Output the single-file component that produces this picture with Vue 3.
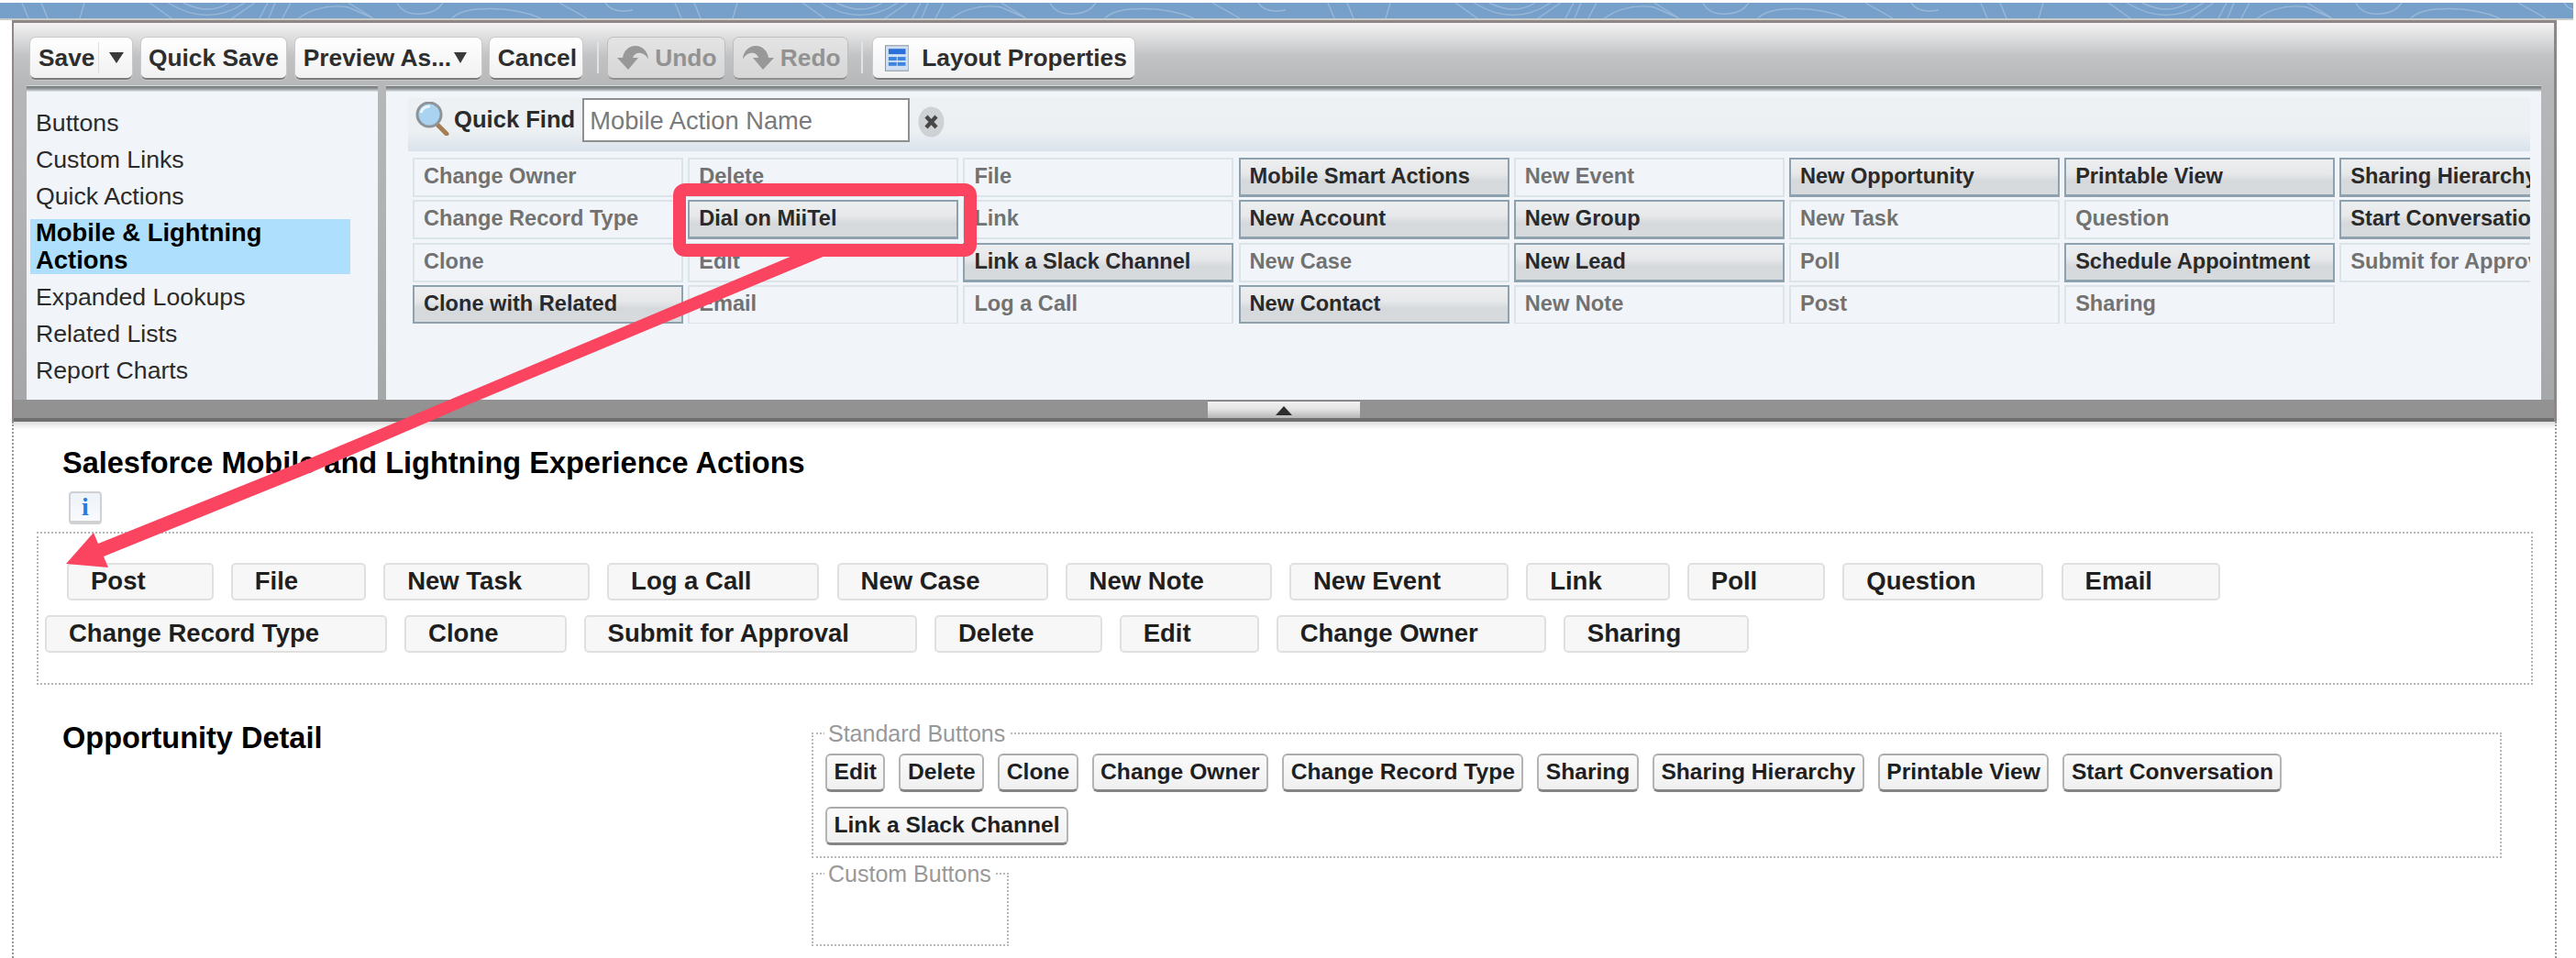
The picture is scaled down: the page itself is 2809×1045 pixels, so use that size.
<script setup>
const sideItems = [
  { label: 'Buttons' },
  { label: 'Custom Links' },
  { label: 'Quick Actions' },
  { label: 'Mobile & Lightning Actions', active: true },
  { label: 'Expanded Lookups' },
  { label: 'Related Lists' },
  { label: 'Report Charts' }
]
const cells = [
  ['Change Owner'], ['Change Record Type'], ['Clone'], ['Clone with Related', 1],
  ['Delete'], ['Dial on MiiTel', 1], ['Edit'], ['Email'],
  ['File'], ['Link'], ['Link a Slack Channel', 1], ['Log a Call'],
  ['Mobile Smart Actions', 1], ['New Account', 1], ['New Case'], ['New Contact', 1],
  ['New Event'], ['New Group', 1], ['New Lead', 1], ['New Note'],
  ['New Opportunity', 1], ['New Task'], ['Poll'], ['Post'],
  ['Printable View', 1], ['Question'], ['Schedule Appointment', 1], ['Sharing'],
  ['Sharing Hierarchy', 1], ['Start Conversation', 1], ['Submit for Approval']
]
const actionsA = ['Post', 'File', 'New Task', 'Log a Call', 'New Case', 'New Note', 'New Event', 'Link', 'Poll', 'Question', 'Email']
const actionsB = ['Change Record Type', 'Clone', 'Submit for Approval', 'Delete', 'Edit', 'Change Owner', 'Sharing']
const standard = ['Edit', 'Delete', 'Clone', 'Change Owner', 'Change Record Type', 'Sharing', 'Sharing Hierarchy', 'Printable View', 'Start Conversation', 'Link a Slack Channel']
</script>

<template>
  <div class="page">
    <svg class="strip" width="2806" height="17">
      <defs>
        <pattern id="swirl" width="712" height="17" patternUnits="userSpaceOnUse">
          <g fill="none" stroke="#a4c0de" stroke-width="1.4" opacity="0.75">
            <path d="M24 0L31 17M45 0L52 17M92 0L87 17M163 0L187 17" />
            <path d="M183 0Q227 27 267 0M200 0Q228 14 250 0" />
            <path d="M278 0L253 17M292 0L283 17M300 0L293 17M317 0L308 17" />
            <path d="M325 17Q350 0 380 5L407 17M380 0L407 17" />
            <path d="M433 0Q440 14 460 12Q476 11 483 0" />
            <path d="M493 17Q500 9 520 7Q560 4 590 17M610 0L640 17M660 0Q668 12 690 8" />
          </g>
        </pattern>
      </defs>
      <rect width="2806" height="17" fill="#769fc9" />
      <rect width="2806" height="17" fill="url(#swirl)" />
    </svg>
    <div class="stripline"></div>

    <section class="panel">
      <div class="toolbar">
        <button class="tool save"><span class="save-label">Save</span><i class="down"></i></button>
        <button class="tool">Quick Save</button>
        <button class="tool preview">Preview As...<i class="down small"></i></button>
        <button class="tool cancel">Cancel</button>
        <span class="sep"></span>
        <button class="tool off undo">
          <svg width="34" height="26" viewBox="0 0 34 26"><path d="M0 13L12 26L23 13L17 13C18 9 22 7 26 8C30 9 33 12 34 15C34 7 28 0 20 0C12 0 7 6 6 13Z" fill="#989898" /></svg>
          Undo
        </button>
        <button class="tool off redo">
          <svg width="34" height="26" viewBox="0 0 34 26"><path transform="translate(34 0) scale(-1 1)" d="M0 13L12 26L23 13L17 13C18 9 22 7 26 8C30 9 33 12 34 15C34 7 28 0 20 0C12 0 7 6 6 13Z" fill="#989898" /></svg>
          Redo
        </button>
        <span class="sep"></span>
        <button class="tool layout">
          <svg width="27" height="29" viewBox="0 0 27 29">
            <rect x="0.5" y="0.5" width="26" height="28" fill="#cfe0f5" stroke="#8b9298" />
            <rect x="4" y="4" width="19" height="6" fill="#2a70d8" />
            <rect x="4" y="13" width="9" height="4" fill="#3d83e0" />
            <rect x="14" y="13" width="9" height="4" fill="#3d83e0" />
            <rect x="4" y="19" width="9" height="4" fill="#3d83e0" />
            <rect x="14" y="19" width="9" height="4" fill="#3d83e0" />
          </svg>
          Layout Properties
        </button>
      </div>

      <div class="body">
        <nav class="side">
          <a v-for="item in sideItems" :key="item.label" class="side-item" :class="{ active: item.active }">{{ item.label }}</a>
        </nav>
        <div class="main">
          <div class="find">
            <svg class="lens" width="38" height="37" viewBox="0 0 38 37">
              <path d="M25 25L35 35" stroke="#a57e55" stroke-width="5" stroke-linecap="round" />
              <circle cx="16" cy="14" r="13" fill="#a9d3f0" stroke="#8d9499" stroke-width="3" />
              <path d="M7 12Q9 5 17 5" fill="none" stroke="#e9f6fd" stroke-width="3" />
            </svg>
            <span class="find-label">Quick Find</span>
            <input class="find-input" placeholder="Mobile Action Name" />
            <svg class="clear" width="29" height="34" viewBox="0 0 29 34">
              <ellipse cx="14.5" cy="17" rx="14" ry="16.5" fill="#cfd2d4" />
              <path d="M9 11L20 23M20 11L9 23" stroke="#474747" stroke-width="4.4" />
            </svg>
          </div>
          <div class="grid">
            <div v-for="c in cells" :key="c[0]" class="cell" :class="{ on: c[1] }">{{ c[0] }}</div>
          </div>
        </div>
      </div>

      <div class="bar">
        <div class="handle"><i class="up"></i></div>
      </div>
    </section>

    <section class="canvas">
      <h2 class="title first">Salesforce Mobile and Lightning Experience Actions</h2>
      <div class="info"><span>i</span></div>
      <div class="actions">
        <div class="act-row one">
          <div v-for="a in actionsA" :key="a" class="act">{{ a }}</div>
        </div>
        <div class="act-row">
          <div v-for="a in actionsB" :key="a" class="act">{{ a }}</div>
        </div>
      </div>
      <div class="detail">
        <h2 class="title second">Opportunity Detail</h2>
        <div class="sets">
          <fieldset class="set">
            <legend>Standard Buttons</legend>
            <div class="std-list">
              <div v-for="s in standard" :key="s" class="std">{{ s }}</div>
            </div>
          </fieldset>
          <fieldset class="set custom">
            <legend>Custom Buttons</legend>
            <div class="custom-space"></div>
          </fieldset>
        </div>
      </div>
    </section>

    <svg class="mark" width="2809" height="1045" viewBox="0 0 2809 1045">
      <polygon points="864,279 900,279 514,440 340,515 113,607 118,619 72,615 102,581 107,593 338,500 481,440" fill="#fb4560" />
      <rect x="741" y="207" width="317" height="66" rx="6" fill="none" stroke="#fb4560" stroke-width="14" />
    </svg>
  </div>
</template>

<style>
html, body { margin: 0; background: #fff; }
</style>

<style scoped>
.page {
  position: relative;
  width: 2809px;
  height: 1045px;
  overflow: hidden;
  background: #fff;
  font-family: "Liberation Sans", Arial, sans-serif;
  color: #222;
}
.strip { display: block; margin-top: 3px; }
.stripline { width: 2806px; height: 2px; background: #c9cbca; }

.panel {
  margin-left: 13px;
  width: 2775px;
  box-sizing: border-box;
  border: solid #8f8686;
  border-width: 3px 3px 0 2px;
  background: linear-gradient(#f3f3f3 0, #c2c3c5 36px, #b6b7b9 68px, #b1b2b4 200px, #a6a7a8 411px);
}
.toolbar {
  height: 68px;
  box-sizing: border-box;
  padding: 16px 0 0 18px;
  display: flex;
  align-items: flex-start;
  gap: 9.5px;
}
.tool {
  height: 46px;
  box-sizing: border-box;
  padding: 0 8.5px;
  border: 0;
  border-bottom: 2px solid #7c7c7c;
  border-radius: 6px;
  background: linear-gradient(#fff, #f1f1f1);
  box-shadow: 0 0 0 1px #c9c9c9;
  font: bold 26.3px/44px "Liberation Sans", Arial, sans-serif;
  color: #2e2e2e;
  display: flex;
  align-items: center;
  white-space: nowrap;
}
.save { width: 111px; padding-left: 9px; }
.save-label { padding-right: 4px; border-right: 1px solid #d9dfe2; line-height: 34px; height: 34px; }
.down {
  display: block;
  margin-left: 11px;
  width: 0;
  height: 0;
  border-left: 8px solid transparent;
  border-right: 8px solid transparent;
  border-top: 12px solid #3a3a3a;
}
.down.small { margin-left: 3px; border-left-width: 7px; border-right-width: 7px; }
.preview { width: 203px; padding: 0 6px 0 9px; }
.cancel { width: 101px; }
.sep { width: 2px; height: 34px; margin: 5px 1px 0 6px; background: #e3e3e3; }
.off {
  background: linear-gradient(#e4e4e4, #d6d6d6);
  color: #929292;
  gap: 7px;
  border-bottom-color: #8f8f8f;
  box-shadow: 0 0 0 1px #bdbdbd;
}
.undo { width: 127px; padding: 0 0 0 10px; }
.redo { width: 124px; padding: 0 0 0 10px; }
.layout { width: 285px; gap: 14px; padding: 0 8px 0 13px; }

.body {
  display: flex;
  gap: 9px;
  margin: 0 14px;
  height: 343px;
}
.side, .main {
  background:
    linear-gradient(#d5d6d6 0, #d5d6d6 1px, #6f7577 1px, #959b9d 4px, #e3e9ec 7px) no-repeat top / 100% 7px,
    #f1f5f9;
}
.side {
  width: 383px;
  flex: none;
  box-sizing: border-box;
  padding: 21px 0 0 4px;
}
.side-item {
  display: block;
  width: 349px;
  height: 40px;
  box-sizing: border-box;
  padding-left: 6px;
  font-size: 26.7px;
  line-height: 40px;
  color: #2b2b2b;
}
.side-item.active {
  height: 60px;
  margin: 5px 0 5px;
  padding: 0 40px 0 6px;
  background: #aee0fd;
  font-size: 27.4px;
  font-weight: bold;
  line-height: 30px;
  color: #000;
}
.main {
  flex: 1;
  min-width: 0;
  box-sizing: border-box;
  padding: 14px 12px 0 24px;
}
.find {
  height: 58px;
  box-sizing: border-box;
  padding-left: 7px;
  display: flex;
  align-items: flex-start;
  background: linear-gradient(#edf1f4 0, #ecf0f3 36px, #dae3eb 58px);
}
.lens { margin-top: 4px; flex: none; }
.find-label {
  margin: 7px 8px 0 5px;
  font-size: 25.6px;
  font-weight: bold;
  line-height: 32px;
  color: #2b2b2b;
}
.find-input {
  width: 357px;
  height: 48px;
  box-sizing: border-box;
  padding: 2px 8px 0 6px;
  border: 2px solid #8f8f8f;
  border-radius: 0;
  outline: 0;
  background: #fff;
  font: 27.3px "Liberation Sans", Arial, sans-serif;
}
.find-input::placeholder { color: #7a7a7a; opacity: 1; }
.clear { margin: 9px 0 0 9px; flex: none; }
.grid {
  margin: 7px 0 0 5px;
  height: 181px;
  overflow: hidden;
  display: grid;
  grid-auto-flow: column;
  grid-template-rows: repeat(4, 43px);
  grid-auto-columns: 295px;
  column-gap: 5.2px;
  row-gap: 3.3px;
}
.cell {
  box-sizing: border-box;
  padding-left: 10px;
  border: 2px solid #dbe4e8;
  font-size: 23.6px;
  font-weight: bold;
  line-height: 36px;
  color: #727272;
  white-space: nowrap;
  overflow: hidden;
}
.cell.on {
  border: 2px solid #8ea1ae;
  border-bottom-width: 3px;
  background: linear-gradient(#eceef0 0, #e6e8ea 40%, #d6d9dc 62%, #d8dbde 100%);
  color: #2a2a2a;
}
.bar {
  height: 24px;
  display: flex;
  justify-content: center;
  box-sizing: border-box;
  border-bottom: 4px solid #6e6e6e;
  background: #929292;
}
.handle {
  width: 166px;
  height: 19px;
  margin-top: 1px;
  display: flex;
  justify-content: center;
  padding-top: 5px;
  box-sizing: border-box;
  background: linear-gradient(#f1f1f1, #e4e4e4 45%, #b6b6b6);
  border-top: 1px solid #7d7d7d;
}
.up {
  display: block;
  width: 0;
  height: 0;
  border-left: 9px solid transparent;
  border-right: 9px solid transparent;
  border-bottom: 10px solid #2e2e2e;
}

.canvas {
  margin-left: 13px;
  width: 2775px;
  height: 585px;
  box-sizing: border-box;
  border-left: 2px dotted #9a9a9a;
  border-right: 2px dotted #9a9a9a;
  padding-top: 25px;
  background: linear-gradient(#dedede, #f1f1f1 5px, #fff 9px) no-repeat top / 100% 9px;
}
.title {
  margin: 0;
  font-size: 32.5px;
  font-weight: bold;
  line-height: 40px;
  color: #000;
  white-space: nowrap;
}
.title.first { padding-left: 53px; }
.info {
  width: 36px;
  height: 36px;
  margin: 11px 0 0 60px;
  box-sizing: border-box;
  border: 2px solid #cfd1d3;
  border-bottom-width: 4px;
  border-radius: 4px;
  background: linear-gradient(#eef3fa, #f8fafd);
  text-align: center;
  font: bold 28px/29px "Liberation Serif", serif;
  color: #2b7bdc;
}
.actions {
  margin: 8px 0 0 25px;
  width: 2722px;
  height: 167px;
  box-sizing: border-box;
  border: 2px dotted #b5b5b5;
  padding: 32px 0 0 7px;
}
.act-row { display: flex; gap: 19.1px; margin-bottom: 16px; }
.act-row.one { margin-left: 24px; }
.act {
  height: 41px;
  box-sizing: border-box;
  padding: 0 72px 0 24px;
  border: 2px solid #e0e0e0;
  border-radius: 5px;
  background: #f7f7f7;
  font-size: 27.5px;
  font-weight: bold;
  line-height: 36px;
  color: #1f1f1f;
  white-space: nowrap;
}
.detail {
  display: flex;
  align-items: flex-start;
  margin-top: 38px;
  padding-left: 53px;
}
.title.second { width: 817px; flex: none; }
.sets { flex: none; }
.set {
  width: 1843px;
  min-width: 0;
  box-sizing: border-box;
  margin: 0;
  padding: 7px 13px 12px;
  border: 2px dotted #b9b9b9;
}
.set legend {
  margin-left: -1px;
  padding: 0 4px;
  font-size: 25px;
  line-height: 30px;
  color: #999;
  white-space: nowrap;
}
.set.custom { width: 215px; margin-top: 2px; padding-bottom: 0; padding-top: 0; }
.custom-space { height: 62px; }
.std-list { display: flex; flex-wrap: wrap; gap: 16px 15px; }
.std {
  height: 42px;
  box-sizing: border-box;
  padding: 0 7.5px;
  border: 2px solid #b4b4b4;
  border-top-color: #aaa;
  border-bottom: 3px solid #858585;
  border-radius: 6px;
  background: linear-gradient(#fafafa, #f0f0f0);
  font-size: 24.6px;
  font-weight: bold;
  line-height: 36px;
  color: #1f1f1f;
  white-space: nowrap;
}
.mark {
  position: absolute;
  top: 0;
  left: 0;
  pointer-events: none;
}
</style>
